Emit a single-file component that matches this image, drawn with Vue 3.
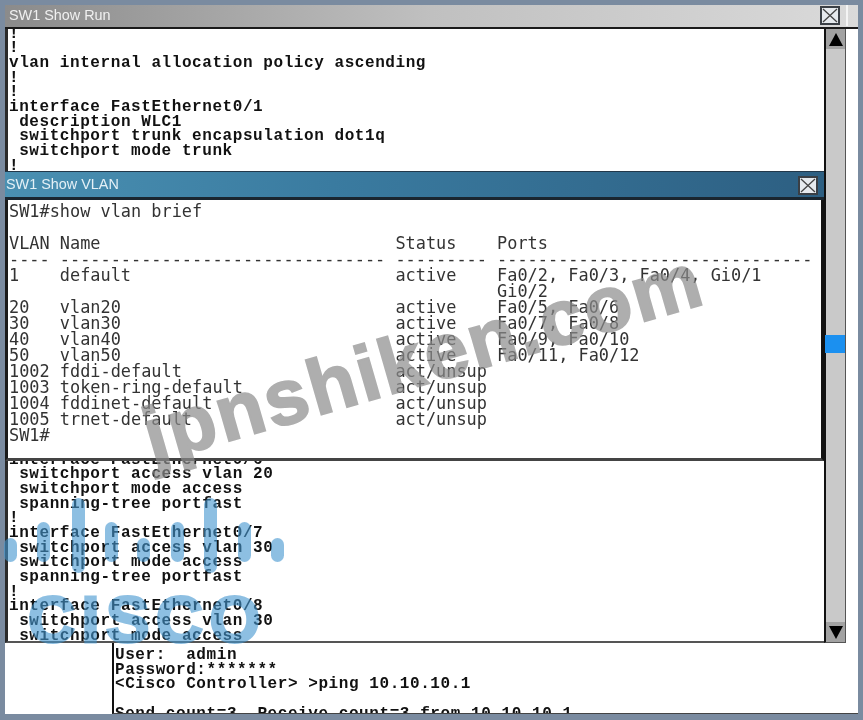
<script setup>
const access = (n, vlan) => [
  `interface FastEthernet0/${n}`,
  ` switchport access vlan ${vlan}`,
  ' switchport mode access',
  ' spanning-tree portfast',
  '!'
]

const runLines = [
  '!',
  '!',
  'vlan internal allocation policy ascending',
  '!',
  '!',
  'interface FastEthernet0/1',
  ' description WLC1',
  ' switchport trunk encapsulation dot1q',
  ' switchport mode trunk',
  '!',
  ...Array(19).fill(''),
  ...access(6, 20),
  ...access(7, 30),
  ...access(8, 30)
]

const vlanLines = [
  'SW1#show vlan brief',
  '',
  'VLAN Name                             Status    Ports',
  '---- -------------------------------- --------- -------------------------------',
  '1    default                          active    Fa0/2, Fa0/3, Fa0/4, Gi0/1',
  '                                                Gi0/2',
  '20   vlan20                           active    Fa0/5, Fa0/6',
  '30   vlan30                           active    Fa0/7, Fa0/8',
  '40   vlan40                           active    Fa0/9, Fa0/10',
  '50   vlan50                           active    Fa0/11, Fa0/12',
  '1002 fddi-default                     act/unsup',
  '1003 token-ring-default               act/unsup',
  '1004 fddinet-default                  act/unsup',
  '1005 trnet-default                    act/unsup',
  'SW1#'
]

const consoleLines = [
  'User:  admin',
  'Password:*******',
  '<Cisco Controller> >ping 10.10.10.1',
  '',
  'Send count=3  Receive count=3 from 10.10.10.1'
]

const bars = [
  { x: 4, y: 538, h: 24 },
  { x: 37, y: 522, h: 40 },
  { x: 72, y: 498, h: 75 },
  { x: 105, y: 522, h: 40 },
  { x: 137, y: 538, h: 24 },
  { x: 171, y: 522, h: 40 },
  { x: 204, y: 498, h: 75 },
  { x: 238, y: 522, h: 40 },
  { x: 271, y: 538, h: 24 }
]
</script>

<template>
  <div class="desktop">
    <section class="run-window">
      <header class="run-title">
        <span class="title-text">SW1 Show Run</span>
        <button class="close run-close" aria-label="Close">
          <svg width="16" height="15" viewBox="0 0 16 15"><path d="M1 1 15 14M15 1 1 14" /></svg>
        </button>
        <i class="title-gap"></i>
      </header>
      <div class="run-row">
        <div class="run-body">
          <div class="run-text">
            <div v-for="(line, i) in runLines" :key="i" class="line">{{ line }}</div>
          </div>
        </div>
        <div class="scrollbar">
          <div class="step"><i class="arrow up"></i></div>
          <div class="thumb"></div>
          <div class="step"><i class="arrow down"></i></div>
        </div>
        <div class="strip"></div>
      </div>
    </section>

    <section class="bottom">
      <div class="blank"></div>
      <div class="console">
        <div v-for="(line, i) in consoleLines" :key="i" class="line">{{ line }}</div>
      </div>
    </section>

    <section class="vlan-window">
      <header class="vlan-title">
        <span class="title-text">SW1 Show VLAN</span>
        <button class="close" aria-label="Close">
          <svg width="16" height="15" viewBox="0 0 16 15"><path d="M1 1 15 14M15 1 1 14" /></svg>
        </button>
      </header>
      <div class="vlan-body">
        <div v-for="(line, i) in vlanLines" :key="i" class="vline">{{ line }}</div>
      </div>
    </section>

    <svg class="logo" width="300" height="170" viewBox="0 490 300 170">
      <rect v-for="b in bars" :key="b.x" :x="b.x" :y="b.y" width="13" :height="b.h" rx="6.5" />
      <text x="28" y="642" textLength="232" lengthAdjust="spacing">CISCO</text>
    </svg>

    <div class="watermark">jpnshiken.com</div>
  </div>
</template>

<style>
html, body { margin: 0; background: #7a8ba0; }
</style>

<style scoped>
.desktop {
  position: relative;
  width: 863px;
  height: 720px;
  box-sizing: border-box;
  padding: 5px 5px 6px;
  display: flex;
  flex-direction: column;
  background: #7a8ba0;
  overflow: hidden;
  filter: blur(0.6px);
}
.run-window {
  height: 638px;
  display: flex;
  flex-direction: column;
  flex: none;
}
.run-title {
  height: 24px;
  flex: none;
  box-sizing: border-box;
  display: flex;
  align-items: flex-start;
  padding: 1px 0 0 4px;
  background: linear-gradient(90deg, #8b8b8b, #c0c0c0 50%, #dadada);
  border-bottom: 2px solid #1a1a1a;
}
.title-text {
  font: 14.4px/19px "Liberation Sans", Arial, sans-serif;
  color: #f0f0f0;
}
.close {
  margin: 0;
  padding: 0;
  width: 20px;
  height: 19px;
  box-sizing: border-box;
  border: 2px solid #3a3f45;
  background: #e6eaee;
  display: flex;
  align-items: center;
  justify-content: center;
}
.close svg path { stroke: #444; stroke-width: 1.3; fill: none; }
.run-close { margin-left: auto; margin-right: 6px; }
.title-gap {
  width: 2px;
  height: 21px;
  margin-top: -1px;
  margin-right: 10px;
  background: #f4f4f4;
}
.run-row {
  flex: 1;
  min-height: 0;
  display: flex;
}
.run-body {
  flex: 1;
  min-width: 0;
  background: #fff;
  border-left: 3px solid #2a2a2a;
  border-bottom: 2px solid #555;
  overflow: hidden;
}
.run-text { margin-top: -2.4px; padding-left: 1px; }
.line {
  height: 14.7px;
  font: bold 16px/14.7px "Liberation Mono", monospace;
  letter-spacing: 0.57px;
  white-space: pre;
  color: #111;
}
.scrollbar {
  position: relative;
  width: 22px;
  flex: none;
  box-sizing: border-box;
  display: flex;
  flex-direction: column;
  justify-content: space-between;
  background: #c9c9c9;
  border-left: 2px solid #111;
  border-right: 1px solid #555;
  border-bottom: 1px solid #555;
}
.step {
  height: 20px;
  background: #a2a2a2;
  display: flex;
  align-items: center;
  justify-content: center;
}
.arrow { width: 0; height: 0; border-left: 7px solid transparent; border-right: 7px solid transparent; }
.arrow.up { border-bottom: 13px solid #000; }
.arrow.down { border-top: 13px solid #000; }
.thumb {
  position: absolute;
  left: -1px;
  top: 306px;
  width: 20px;
  height: 18px;
  background: #1b90f0;
}
.strip { width: 12px; flex: none; background: #fff; }
.bottom {
  flex: 1;
  min-height: 0;
  display: flex;
  background: #fff;
}
.blank { width: 107px; flex: none; }
.console {
  flex: 1;
  min-width: 0;
  box-sizing: border-box;
  padding: 5px 0 0 1px;
  border-left: 2px solid #111;
  border-bottom: 1px solid #444;
  overflow: hidden;
}
.vlan-window {
  position: absolute;
  left: 5px;
  top: 171px;
  width: 819px;
  height: 290px;
  display: flex;
  flex-direction: column;
}
.vlan-title {
  height: 29px;
  flex: none;
  box-sizing: border-box;
  display: flex;
  align-items: flex-start;
  justify-content: space-between;
  padding: 4px 6px 0 1px;
  background: linear-gradient(90deg, #4a90b2, #3a7ba0 40%, #2d5f82);
  border-top: 1px solid #22384a;
  border-bottom: 3px solid #1a2630;
}
.vlan-title .title-text { margin-top: -1px; color: #e4f0f6; }
.vlan-body {
  flex: 1;
  min-height: 0;
  box-sizing: border-box;
  padding: 3px 0 0 1px;
  background: #fff;
  border-left: 3px solid #1a1a1a;
  border-right: 3px solid #111;
  border-bottom: 3px solid #444;
  overflow: hidden;
}
.vline {
  height: 16px;
  font: 16.9px/16px "DejaVu Sans Mono", monospace;
  white-space: pre;
  color: #333;
}
.logo {
  position: absolute;
  left: 0;
  top: 490px;
  opacity: 0.6;
}
.logo rect { fill: #4396d0; }
.logo text {
  font: bold 65px "Liberation Sans", Arial, sans-serif;
  fill: #4396d0;
  stroke: #4396d0;
  stroke-width: 3px;
}
.watermark {
  position: absolute;
  left: 422.5px;
  top: 357px;
  transform: translate(-50%, -50%) rotate(-16.1deg);
  font: bold 78px/1 "Liberation Sans", Arial, sans-serif;
  letter-spacing: 2.5px;
  color: #8c8c8c;
  -webkit-text-stroke: 2px #8c8c8c;
  opacity: 0.7;
  white-space: nowrap;
}
</style>
